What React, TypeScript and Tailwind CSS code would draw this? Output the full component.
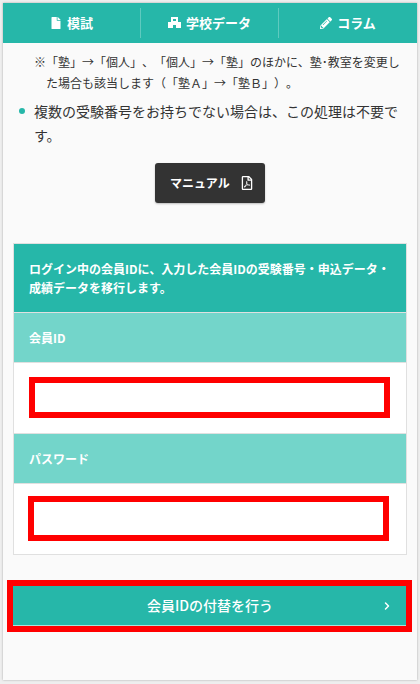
import { ChevronRight } from "lucide-react";
import { FaFile, FaPencilAlt, FaRegFilePdf } from "react-icons/fa";

const font = "font-['Noto_Sans_CJK_JP','Noto_Sans',sans-serif] [text-spacing-trim:space-all]";

function NavItem({ icon, label, last }: { icon: React.ReactNode; label: string; last?: boolean }) {
  return (
    <div className={`flex h-[30px] items-center justify-center gap-[5px] text-[13px] font-bold text-white ${last ? "flex-1" : "w-[138px] border-r border-[#5fcabf]"}`}>
      {icon}
      <span>{label}</span>
    </div>
  );
}

function SchoolIcon() {
  return (
    <svg width="13" height="12" viewBox="0 0 13 12" fill="currentColor">
      <path
        fillRule="evenodd"
        d="M3 0h7v5h3v6h-5V8H5v3H0V5h3zM5 2v2h3V2z"
      />
    </svg>
  );
}

function FieldLabel({ children }: { children: React.ReactNode }) {
  return (
    <div className="flex h-[50px] items-center border-b border-[#e0e0e0] bg-[#73d5ca] px-[15px] text-[12px] font-bold text-white">
      {children}
    </div>
  );
}

export default function App() {
  return (
    <div className={`${font} h-[684px] overflow-hidden bg-[#eeeeee] px-[3px] pt-[3px]`}>
      <div className="h-[677px] bg-[#fafafa] shadow-[0_0_2px_rgba(0,0,0,0.3)]">
        <nav className="flex h-[40px] items-center bg-[#26b7a9]">
          <NavItem icon={<FaFile size={12} />} label="模試" />
          <NavItem icon={<SchoolIcon />} label="学校データ" />
          <NavItem icon={<FaPencilAlt size={12} />} label="コラム" last />
        </nav>

        <div className="pl-[31px] pr-[17px] pt-[8px] text-[#333333]">
          <p className="pl-[12px] -indent-[12px] text-[12px] leading-[21px]">
            ※「塾」→「個人」、「個人」→「塾」のほかに、塾･教室を変更した場合も該当します（「塾Ａ」→「塾Ｂ」）。
          </p>
          <div className="relative mt-[6px]">
            <span className="absolute -left-[15px] top-[9px] h-[6px] w-[6px] rounded-full bg-[#26b7a9]" />
            <p className="text-[14px] leading-[24px]">複数の受験番号をお持ちでない場合は、この処理は不要です。</p>
          </div>
        </div>

        <div className="mt-[16px] flex justify-center">
          <button className="flex h-[40px] w-[110px] items-center gap-[10px] rounded-[3px] bg-[#333333] pl-[15px] text-[12px] font-bold text-white shadow-[0_1px_2px_rgba(0,0,0,0.25)]">
            マニュアル
            <FaRegFilePdf size={14} />
          </button>
        </div>

        <section className="mx-[10px] mt-[40px] border border-[#e0e0e0] bg-white">
          <div className="flex h-[69px] items-center border-b border-[#e0e0e0] bg-[#26b7a9] px-[15px] text-[12px] font-bold leading-[19px] text-white">
            ログイン中の会員IDに、入力した会員IDの受験番号・申込データ・成績データを移行します。
          </div>
          <FieldLabel>会員ID</FieldLabel>
          <div className="h-[71px] border-b border-[#e0e0e0] pl-[15px] pr-[16px] pt-[14px]">
            <input className="box-border block h-[41px] w-full border-[6px] border-[#ff0000] bg-white" />
          </div>
          <FieldLabel>パスワード</FieldLabel>
          <div className="h-[70px] pl-[14px] pr-[17px] pt-[12px]">
            <input className="box-border block h-[45px] w-full border-[6px] border-[#ff0000] bg-white" />
          </div>
        </section>

        <div className="ml-[4px] mr-[5px] mt-[25px] border-[6px] border-[#ff0000]">
          <button className="relative flex h-[40px] w-full items-center justify-center border-b border-[#a8e3dc] bg-[#26b7a9] pl-[1px] text-[14px] font-medium text-white">
            会員IDの付替を行う
            <ChevronRight size={12} strokeWidth={3} className="absolute right-[13px] top-[14px]" />
          </button>
        </div>
      </div>
    </div>
  );
}
